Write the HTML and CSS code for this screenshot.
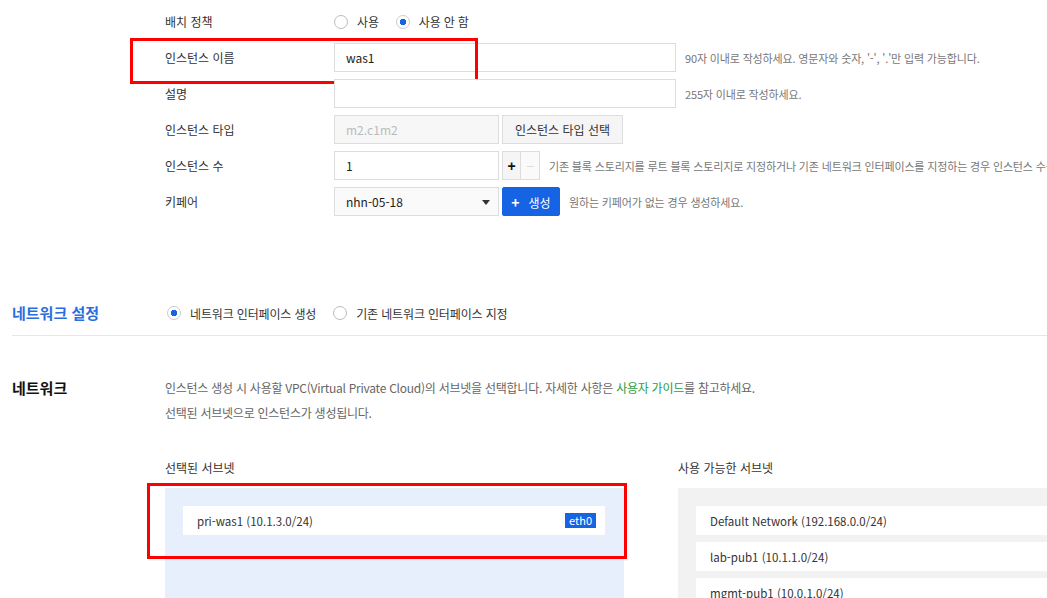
FILE: index.html
```html
<!DOCTYPE html>
<html lang="ko">
<head>
    <meta charset="UTF-8">
    <meta name="viewport" content="width=device-width, initial-scale=1.0">
    <title>인스턴스 생성</title>
    <link rel="stylesheet" href="styles.css">
</head>
<body>

    <!-- 기본 정보 -->
    <section class="section basic">
        <div class="section-title"></div>
        <div class="rows">
            <div class="row">
                <span class="label">배치 정책</span>
                <label class="radio"><span class="dot"></span>사용</label>
                <label class="radio on"><span class="dot"></span>사용 안 함</label>
            </div>
            <div class="row">
                <span class="label">인스턴스 이름</span>
                <div class="input wide">was1</div>
                <span class="help">90자 이내로 작성하세요. 영문자와 숫자, '-', '.'만 입력 가능합니다.</span>
                <div class="mark mark-name"></div>
            </div>
            <div class="row">
                <span class="label">설명</span>
                <div class="input wide"></div>
                <span class="help">255자 이내로 작성하세요.</span>
            </div>
            <div class="row">
                <span class="label">인스턴스 타입</span>
                <div class="input short disabled">m2.c1m2</div>
                <button class="btn">인스턴스 타입 선택</button>
            </div>
            <div class="row">
                <span class="label">인스턴스 수</span>
                <div class="input short">1</div>
                <div class="stepper">
                    <button class="step">+</button>
                    <button class="step off">&minus;</button>
                </div>
                <span class="help">기존 블록 스토리지를 루트 블록 스토리지로 지정하거나 기존 네트워크 인터페이스를 지정하는 경우 인스턴스 수를 변경할 수 없습니다.</span>
            </div>
            <div class="row">
                <span class="label">키페어</span>
                <div class="input short select">nhn-05-18<span class="caret"></span></div>
                <button class="btn primary"><b>+</b>생성</button>
                <span class="help">원하는 키페어가 없는 경우 생성하세요.</span>
            </div>
        </div>
    </section>

    <!-- 네트워크 설정 -->
    <section class="section net-setting">
        <h2 class="section-title blue">네트워크 설정</h2>
        <div class="radios">
            <label class="radio on"><span class="dot"></span>네트워크 인터페이스 생성</label>
            <label class="radio"><span class="dot"></span>기존 네트워크 인터페이스 지정</label>
        </div>
    </section>

    <!-- 네트워크 -->
    <section class="section network">
        <h2 class="section-title">네트워크</h2>
        <div class="net-body">
            <p class="desc">인스턴스 생성 시 사용할 VPC(Virtual Private Cloud)의 서브넷을 선택합니다. 자세한 사항은 <a href="#">사용자 가이드</a>를 참고하세요.</p>
            <p class="desc">선택된 서브넷으로 인스턴스가 생성됩니다.</p>

            <div class="subnets">
                <div class="subnet-col">
                    <h3 class="col-title">선택된 서브넷</h3>
                    <div class="panel selected">
                        <div class="item">pri-was1 (10.1.3.0/24)<span class="badge">eth0</span></div>
                        <div class="mark mark-subnet"></div>
                    </div>
                </div>
                <div class="subnet-col">
                    <h3 class="col-title">사용 가능한 서브넷</h3>
                    <div class="panel">
                        <div class="item">Default Network (192.168.0.0/24)</div>
                        <div class="item">lab-pub1 (10.1.1.0/24)</div>
                        <div class="item">mgmt-pub1 (10.0.1.0/24)</div>
                    </div>
                </div>
            </div>
        </div>
    </section>

</body>
</html>
```

FILE: styles.css
```css
html {
    overflow: hidden;
}
body {
    margin: 0;
    padding: 0 0 0 12px;
    font-family: "Noto Sans CJK KR", "Noto Sans", sans-serif;
    font-size: 12px;
    color: #333;
    background: #fff;
}
.section {
    display: grid;
    grid-template-columns: 153px 1fr;
}
.section-title {
    margin: 0;
    font-size: 15px;
    font-weight: bold;
    color: #111;
}
.section-title.blue {
    color: #2a6ee0;
}

/* form rows */
.rows {
    padding-top: 7px;
    display: flex;
    flex-direction: column;
    gap: 7px;
}
.row {
    position: relative;
    display: flex;
    align-items: center;
    height: 29px;
    white-space: nowrap;
}
.label {
    width: 169px;
    flex: none;
}
.input {
    box-sizing: border-box;
    flex: none;
    height: 29px;
    border: 1px solid #ddd;
    background: #fff;
    padding: 0 11px;
    line-height: 27px;
    font-size: 12px;
    color: #222;
}
.input.wide {
    width: 342px;
}
.input.short {
    width: 165px;
}
.input.disabled {
    background: #f7f7f7;
    color: #bbb;
}
.input.select {
    position: relative;
    background: #fafafa;
}
.caret {
    position: absolute;
    right: 8px;
    top: 12px;
    border-left: 4px solid transparent;
    border-right: 4px solid transparent;
    border-top: 5px solid #333;
}
.help {
    margin-left: 9px;
    font-size: 11px;
    letter-spacing: -0.15px;
    color: #777;
}
.btn {
    box-sizing: border-box;
    flex: none;
    height: 29px;
    margin-left: 3px;
    padding: 0 12px;
    border: 1px solid #ddd;
    background: #f5f5f5;
    font-family: inherit;
    font-size: 12px;
    color: #333;
}
.btn.primary {
    width: 58px;
    padding: 0;
    border-color: #1664e4;
    background: #1664e4;
    color: #fff;
    border-radius: 2px;
}
.btn.primary b {
    margin-right: 9px;
    font-size: 14px;
}
.stepper {
    display: flex;
    flex: none;
    margin-left: 3px;
}
.step {
    box-sizing: border-box;
    width: 19px;
    height: 29px;
    padding: 0;
    border: 1px solid #ddd;
    background: #f5f5f5;
    font-size: 14px;
    font-weight: bold;
    color: #111;
}
.step.off {
    border-left: none;
    background: #fafafa;
    color: #ddd;
    font-weight: normal;
}

/* radio buttons */
.radio {
    display: flex;
    align-items: center;
    margin-right: 17px;
    letter-spacing: -0.15px;
}
.dot {
    box-sizing: border-box;
    width: 14px;
    height: 14px;
    margin-right: 9px;
    border: 1px solid #bbb;
    border-radius: 50%;
    background: #fff;
}
.radio.on .dot {
    border-color: #ccc;
    background: radial-gradient(circle, #1664e4 0 3px, #fff 3.5px);
}

/* 네트워크 설정 */
.net-setting {
    margin-top: 87px;
    align-items: center;
    height: 20px;
    padding-bottom: 12px;
    border-bottom: 1px solid #e6e6e6;
}
.net-setting .section-title {
    line-height: 20px;
}
.radios {
    display: flex;
    padding-left: 2px;
}

/* 네트워크 */
.network {
    margin-top: 42px;
}
.network .section-title {
    line-height: 20px;
}
.desc {
    margin: 0 0 5px;
    line-height: 20px;
    font-size: 12px;
    letter-spacing: -0.25px;
    color: #666;
}
.desc a {
    color: #2a9d3c;
    text-decoration: none;
}
.subnets {
    display: grid;
    grid-template-columns: 459px 459px;
    gap: 54px;
    margin-top: 35px;
}
.col-title {
    margin: 0 0 10px;
    font-size: 12px;
    font-weight: normal;
    line-height: 20px;
    color: #333;
}
.panel {
    position: relative;
    height: 140px;
    padding: 18px;
    display: flex;
    flex-direction: column;
    gap: 7px;
    background: #f2f2f2;
}
.panel.selected {
    background: #e8effc;
    padding-right: 19px;
}
.item {
    display: flex;
    align-items: center;
    justify-content: space-between;
    flex: none;
    height: 29px;
    padding: 0 9px 0 14px;
    background: #fff;
    font-size: 11.5px;
    color: #333;
}
.badge {
    padding: 0 4px;
    line-height: 15px;
    font-size: 11px;
    color: #fff;
    background: #1664e4;
}

/* highlight frames */
.mark {
    position: absolute;
    border: 3px solid #f00;
    pointer-events: none;
}
.mark-name {
    left: -35px;
    top: -5px;
    width: 342px;
    height: 40px;
}
.mark-subnet {
    left: -18px;
    top: -5px;
    width: 474px;
    height: 70px;
}
```
